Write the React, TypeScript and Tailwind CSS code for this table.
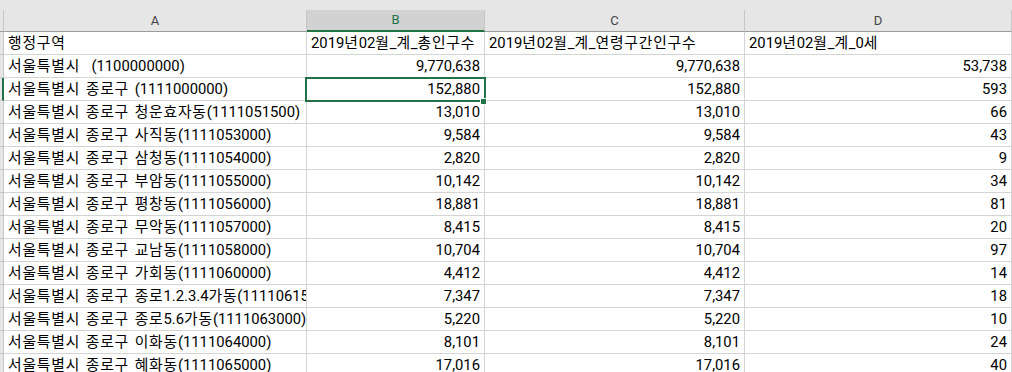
const rows: [string, string, string, string][] = [
  ["서울특별시  (1100000000)", "9,770,638", "9,770,638", "53,738"],
  ["서울특별시 종로구 (1111000000)", "152,880", "152,880", "593"],
  ["서울특별시 종로구 청운효자동(1111051500)", "13,010", "13,010", "66"],
  ["서울특별시 종로구 사직동(1111053000)", "9,584", "9,584", "43"],
  ["서울특별시 종로구 삼청동(1111054000)", "2,820", "2,820", "9"],
  ["서울특별시 종로구 부암동(1111055000)", "10,142", "10,142", "34"],
  ["서울특별시 종로구 평창동(1111056000)", "18,881", "18,881", "81"],
  ["서울특별시 종로구 무악동(1111057000)", "8,415", "8,415", "20"],
  ["서울특별시 종로구 교남동(1111058000)", "10,704", "10,704", "97"],
  ["서울특별시 종로구 가회동(1111060000)", "4,412", "4,412", "14"],
  ["서울특별시 종로구 종로1.2.3.4가동(1111061500)", "7,347", "7,347", "18"],
  ["서울특별시 종로구 종로5.6가동(1111063000)", "5,220", "5,220", "10"],
  ["서울특별시 종로구 이화동(1111064000)", "8,101", "8,101", "24"],
  ["서울특별시 종로구 혜화동(1111065000)", "17,016", "17,016", "40"],
];

const cols = "grid grid-cols-[4px_303px_178px_260px_267px]";
const cell =
  "h-[23px] border-b border-r border-[#d4d4d4] px-[4px] leading-[22px] overflow-hidden whitespace-pre [word-spacing:2px]";

// Hangul glyphs in the sheet font run a little wider than Noto's
function Txt({ s }: { s: string }) {
  return (
    <>
      {s.split(/([\uAC00-\uD7A3]+)/).map((part, i) =>
        /[\uAC00-\uD7A3]/.test(part) ? (
          <span key={i} className="tracking-[0.8px]">
            {part}
          </span>
        ) : (
          part
        )
      )}
    </>
  );
}

export default function App() {
  return (
    <div
      className="w-[1012px] h-[372px] overflow-hidden bg-white text-[14.8px] text-black"
      style={{ fontFamily: 'Roboto, "Noto Sans CJK KR", sans-serif' }}
    >
      {/* top strip */}
      <div className="h-[10px] bg-[#e6e6e6]" />

      {/* column headers */}
      <div className={`${cols} h-[22px] bg-[#e6e6e6] text-[13px] text-[#444]`}>
        <div className="border-r border-b border-[#9b9b9b] border-r-[#c6c6c6]" />
        <div className="flex items-center justify-center border-r border-b border-[#9b9b9b] border-r-[#c6c6c6]">A</div>
        <div className="flex items-center justify-center border-r border-b-2 border-r-[#c6c6c6] border-b-[#217346] bg-[#d2d2d2] text-[#217346]">B</div>
        <div className="flex items-center justify-center border-r border-b border-[#9b9b9b] border-r-[#c6c6c6]">C</div>
        <div className="flex items-center justify-center border-r border-b border-[#9b9b9b] border-r-[#c6c6c6]">D</div>
      </div>

      {/* sheet body */}
      <div className="relative">
        <div className={cols}>
          <div className="h-[23px] bg-[#e6e6e6] border-r border-b border-[#c6c6c6]" />
          <div className={cell}><Txt s="행정구역" /></div>
          <div className={cell}><Txt s="2019년02월_계_총인구수" /></div>
          <div className={cell}><Txt s="2019년02월_계_연령구간인구수" /></div>
          <div className={cell}><Txt s="2019년02월_계_0세" /></div>
        </div>
        {rows.map((r, i) => (
          <div key={i} className={cols}>
            <div
              className={`h-[23px] bg-[#e6e6e6] border-b border-[#c6c6c6] ${
                i === 1 ? "border-r-2 border-r-[#217346]" : "border-r"
              }`}
            />
            <div className={cell}><Txt s={r[0]} /></div>
            <div className={`${cell} text-right`}>{r[1]}</div>
            <div className={`${cell} text-right`}>{r[2]}</div>
            <div className={`${cell} text-right`}>{r[3]}</div>
          </div>
        ))}

        {/* active cell B3 */}
        <div className="absolute left-[305px] top-[45px] w-[181px] h-[25px] border-2 border-[#217346] pointer-events-none" />
        <div className="absolute left-[480px] top-[66px] w-[7px] h-[7px] bg-[#217346] border border-white" />
      </div>
    </div>
  );
}
